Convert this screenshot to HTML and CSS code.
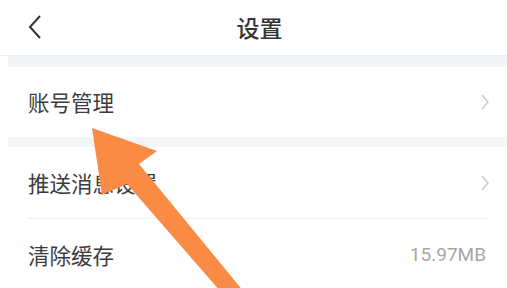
FILE: index.html
```html
<!DOCTYPE html>
<html lang="zh">
<head>
<meta charset="utf-8">
<link rel="stylesheet" href="styles.css">
</head>
<body>
<div class="page">
  <header class="nav">
    <svg class="back" width="16" height="26" viewBox="0 0 16 26"><path d="M13 2 L3 13 L13 24" fill="none" stroke="#333" stroke-width="2"/></svg>
    <h1 class="title">设置</h1>
  </header>
  <div class="band band-top"></div>
  <div class="row row-first">
    <span class="label">账号管理</span>
    <svg class="chev" width="10" height="16" viewBox="0 0 10 16"><path d="M2 1 L8 8 L2 15" fill="none" stroke="#c9c9c9" stroke-width="1.4"/></svg>
  </div>
  <div class="band"></div>
  <div class="row">
    <span class="label">推送消息设置</span>
    <svg class="chev" width="10" height="16" viewBox="0 0 10 16"><path d="M2 1 L8 8 L2 15" fill="none" stroke="#c9c9c9" stroke-width="1.4"/></svg>
  </div>
  <div class="divider"></div>
  <div class="row">
    <span class="label">清除缓存</span>
    <span class="value">15.97MB</span>
  </div>
  <svg class="arrow" width="507" height="288" viewBox="0 0 507 288">
    <polygon points="92,128 157,151 139,164 244,292 221,292 127,184 102,195" fill="#f98b45"/>
  </svg>
</div>
</body>
</html>
```
FILE: styles.css
```css
html, body {
  margin: 0;
  padding: 0;
  background: #fff;
}
.page {
  position: relative;
  width: 507px;
  height: 288px;
  overflow: hidden;
  font-family: "Noto Sans CJK SC", "Noto Sans", sans-serif;
  color: #3a3a3a;
}
.nav {
  height: 56px;
  display: flex;
  align-items: center;
  justify-content: center;
  position: relative;
  border-bottom: 1px solid #eef0f2;
  box-sizing: border-box;
  padding-left: 12px;
}
.back {
  position: absolute;
  left: 27px;
  top: 14px;
}
.title {
  margin: 0;
  font-size: 23px;
  font-weight: 500;
  color: #333;
  line-height: 1;
  padding-bottom: 1px;
}
.band {
  height: 10px;
  margin-left: 8px;
  background: #f3f4f6;
}
.band-top {
  height: 11px;
}
.row {
  height: 71px;
  display: flex;
  align-items: center;
  justify-content: space-between;
  padding: 0 17px 0 28px;
  box-sizing: border-box;
}
.row-first {
  height: 70px;
}
.label {
  font-size: 21.5px;
  line-height: 1;
  color: #3c3c3c;
}
.value {
  font-family: "Roboto", "Liberation Sans", sans-serif;
  font-size: 19px;
  color: #a6a6a6;
  padding-right: 4px;
}
.divider {
  height: 1px;
  background: #eeeeee;
  margin: 0 19px 0 28px;
}
.arrow {
  position: absolute;
  left: 0;
  top: 0;
}
```
